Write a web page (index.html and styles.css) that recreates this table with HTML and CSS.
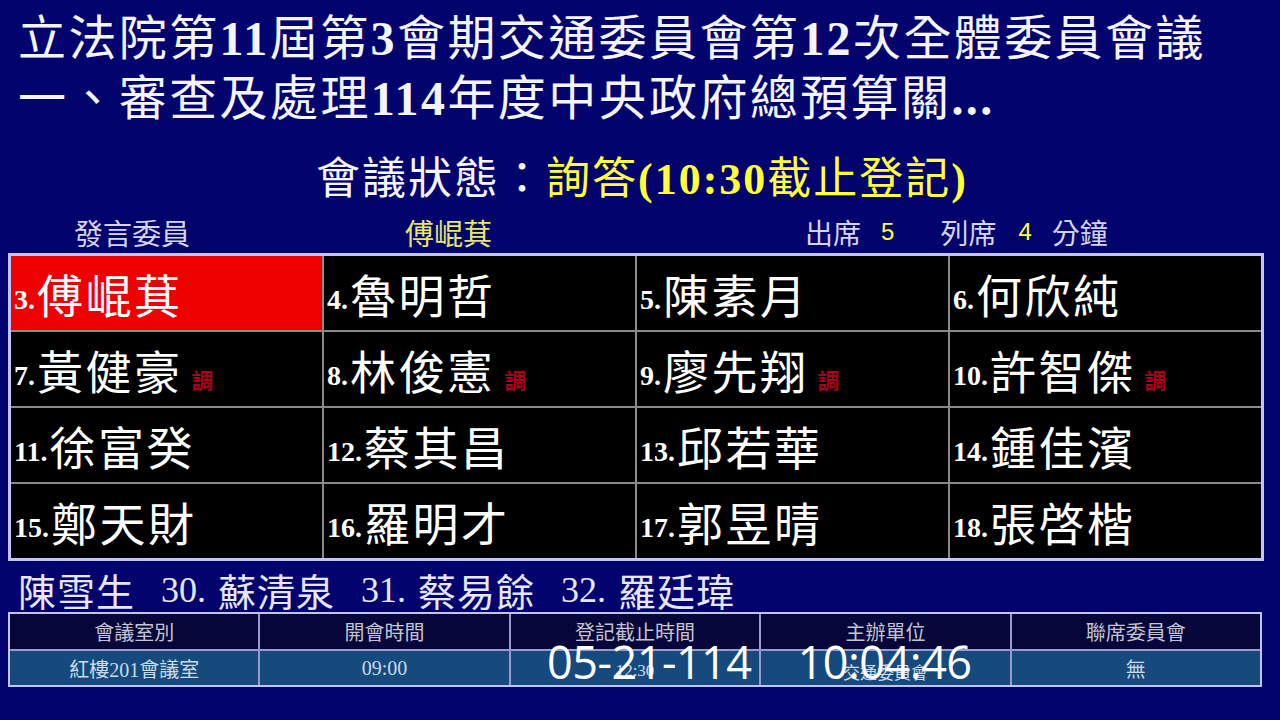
FILE: index.html
```html
<!DOCTYPE html>
<html lang="zh-Hant">
<head>
<meta charset="utf-8">
<title>立法院交通委員會</title>
<link rel="stylesheet" href="styles.css">
</head>
<body>
<div class="screen">
  <div class="title">
    <div class="title-line">立法院第<span class="num">11</span>屆第<span class="num">3</span>會期交通委員會第<span class="num">12</span>次全體委員會議</div>
    <div class="title-line">一、審查及處理<span class="num">114</span>年度中央政府總預算關<span class="num">...</span></div>
  </div>

  <div class="status">會議狀態：<span class="status-val">詢答<span class="num">(10:30</span>截止登記<span class="num">)</span></span></div>

  <div class="speaker-row">
    <span class="sp-label">發言委員</span>
    <span class="sp-name">傅崐萁</span>
    <span class="sp-time"><span>出席</span><span class="yl y1">5</span><span class="lx">列席</span><span class="yl y2">4</span><span>分鐘</span></span>
  </div>

  <div class="grid">
    <div class="cell active"><span class="no">3.</span><span class="nm">傅崐萁</span></div>
    <div class="cell"><span class="no">4.</span><span class="nm">魯明哲</span></div>
    <div class="cell"><span class="no">5.</span><span class="nm">陳素月</span></div>
    <div class="cell"><span class="no">6.</span><span class="nm">何欣純</span></div>
    <div class="cell"><span class="no">7.</span><span class="nm">黃健豪</span><span class="tag">調</span></div>
    <div class="cell"><span class="no">8.</span><span class="nm">林俊憲</span><span class="tag">調</span></div>
    <div class="cell"><span class="no">9.</span><span class="nm">廖先翔</span><span class="tag">調</span></div>
    <div class="cell"><span class="no">10.</span><span class="nm">許智傑</span><span class="tag">調</span></div>
    <div class="cell"><span class="no">11.</span><span class="nm">徐富癸</span></div>
    <div class="cell"><span class="no">12.</span><span class="nm">蔡其昌</span></div>
    <div class="cell"><span class="no">13.</span><span class="nm">邱若華</span></div>
    <div class="cell"><span class="no">14.</span><span class="nm">鍾佳濱</span></div>
    <div class="cell"><span class="no">15.</span><span class="nm">鄭天財</span></div>
    <div class="cell"><span class="no">16.</span><span class="nm">羅明才</span></div>
    <div class="cell"><span class="no">17.</span><span class="nm">郭昱晴</span></div>
    <div class="cell"><span class="no">18.</span><span class="nm">張啓楷</span></div>
  </div>

  <div class="ticker"><span class="tk">陳雪生</span><span class="tn">30.</span><span class="tk">蘇清泉</span><span class="tn">31.</span><span class="tk">蔡易餘</span><span class="tn">32.</span><span class="tk">羅廷瑋</span></div>

  <div class="info">
    <div class="ih">會議室別</div>
    <div class="ih">開會時間</div>
    <div class="ih">登記截止時間</div>
    <div class="ih">主辦單位</div>
    <div class="ih">聯席委員會</div>
    <div class="id">紅樓201會議室</div>
    <div class="id">09:00</div>
    <div class="id id-small">12:30</div>
    <div class="id id-small">交通委員會</div>
    <div class="id">無</div>
  </div>

  <div class="clock"><span>05-21-114</span><span>10:04:46</span></div>
</div>
</body>
</html>
```

FILE: styles.css
```css
html, body {
  margin: 0;
  padding: 0;
  background: #03036e;
}
.screen {
  position: relative;
  width: 1280px;
  height: 720px;
  overflow: hidden;
  background: #03036e;
  color: #ffffff;
  font-family: "Noto Sans CJK TC", "Liberation Serif", sans-serif;
}
.num {
  font-family: "Liberation Serif", serif;
  font-weight: bold;
  line-height: 1;
}
.title {
  padding: 4px 0 0 18px;
  height: 120px;
}
.title-line {
  font-size: 48px;
  height: 60px;
  line-height: 60px;
  letter-spacing: 2.4px;
  white-space: nowrap;
  color: #f4f4ff;
}
.status {
  margin-top: 26px;
  height: 50px;
  text-align: center;
  font-size: 44px;
  line-height: 50px;
  letter-spacing: 2px;
  color: #f4f4ff;
  padding-left: 4px;
  white-space: nowrap;
}
.status-val {
  color: #ffff3a;
}
.speaker-row {
  display: flex;
  align-items: center;
  height: 36px;
  margin-top: 14px;
  font-size: 29px;
  line-height: 36px;
  white-space: nowrap;
}
.sp-label {
  padding-left: 74px;
  width: 331px;
  color: #d4d4f0;
}
.sp-name {
  width: 400px;
  color: #e6e66a;
}
.sp-time {
  display: flex;
  align-items: center;
  color: #d4d4f0;
  font-size: 28px;
}
.yl {
  color: #ffff3a;
  font-family: "Liberation Sans", sans-serif;
  font-size: 24px;
}
.y1 {
  margin-left: 20px;
  margin-right: 46px;
}
.y2 {
  margin-left: 22px;
  margin-right: 20px;
}
.grid {
  margin: 3px 16px 0 8px;
  border: 3px solid #c4c4f4;
  background: #8a8a8a;
  display: grid;
  grid-template-columns: repeat(4, 1fr);
  grid-auto-rows: 74px;
  gap: 2px;
}
.cell {
  background: #000000;
  display: flex;
  align-items: center;
  padding-left: 3px;
  white-space: nowrap;
}
.cell.active {
  background: #ee0000;
}
.no {
  font-family: "Liberation Serif", serif;
  font-weight: bold;
  font-size: 28px;
  margin-top: 14px;
  margin-right: 2px;
  color: #ffffff;
}
.nm {
  font-size: 46px;
  line-height: 60px;
  color: #ffffff;
  letter-spacing: 2.5px;
}
.tag {
  font-size: 22px;
  color: #a8001c;
  margin-left: 9px;
  margin-top: 20px;
  font-weight: bold;
}
.ticker {
  display: flex;
  align-items: center;
  margin-top: 8px;
  padding-left: 18px;
  height: 42px;
  font-size: 38px;
  line-height: 42px;
  color: #e6e6ff;
  white-space: nowrap;
}
.tk {
  letter-spacing: 1px;
  margin-right: 26px;
}
.tn {
  font-family: "Liberation Serif", serif;
  font-size: 36px;
  width: 57px;
}
.info {
  margin: 1px 18px 0 8px;
  border: 2px solid #c4c4f4;
  background: #9a9ad0;
  display: grid;
  grid-template-columns: repeat(5, 1fr);
  grid-template-rows: 35px 34px;
  gap: 2px;
  font-size: 20px;
  font-family: "Liberation Serif", "Noto Sans CJK TC", serif;
}
.ih {
  background: #06063a;
  color: #c4c4d0;
  display: flex;
  align-items: center;
  justify-content: center;
}
.id {
  background: #174a7c;
  color: #c8dcec;
  display: flex;
  align-items: center;
  justify-content: center;
}
.id-small {
  font-size: 17px;
  padding-top: 6px;
}
.clock {
  position: absolute;
  left: 547px;
  top: 636px;
  display: flex;
  gap: 46px;
  font-family: "Open Sans", "Noto Sans", sans-serif;
  font-size: 45px;
  line-height: 52px;
  color: #ffffff;
  letter-spacing: -0.5px;
}
```
